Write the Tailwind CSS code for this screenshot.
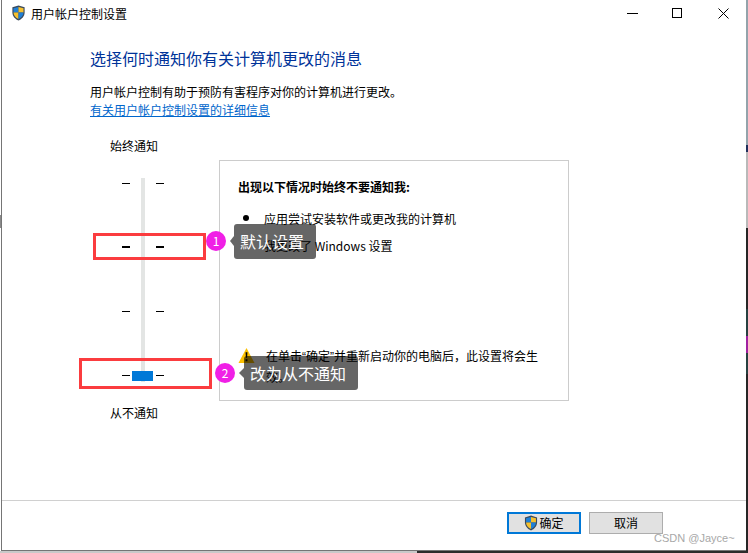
<!DOCTYPE html>
<html lang="zh">
<head>
  <meta charset="UTF-8">
  <title>用户帐户控制设置</title>
  <script src="https://cdn.jsdelivr.net/npm/@tailwindcss/browser@4"></script>
</head>
<body class="w-[748px] h-[553px] overflow-hidden bg-white font-['Noto_Sans_CJK_SC','Noto_Sans',sans-serif] text-[12px] leading-[18px] text-black">
  <div class="flex h-[551px]">
    <!-- sliver of desktop on the left -->
    <div class="w-px flex flex-col shrink-0">
      <div class="h-[215px]"></div>
      <div class="h-[13px] bg-[#8a8a8a]"></div>
    </div>

    <div class="relative w-[745px] h-[551px] bg-white border-l border-b border-[#757575] flex flex-col shrink-0">
      <!-- title bar -->
      <div class="h-[28px] flex items-center shrink-0">
        <svg class="ml-[9px] mb-[3px] w-[15px] h-[16px]" viewBox="0 0 15 17">
          <path d="M7.5 0.5 L14 2.5 V8 C14 12 11 15 7.5 16.5 C4 15 1 12 1 8 V2.5 Z" fill="#3a4a5c"/>
          <path d="M7.5 2 V8 H2.2 V3.4 Z" fill="#1f7fd6"/>
          <path d="M7.5 2 L12.8 3.4 V8 H7.5 Z" fill="#f6c02c"/>
          <path d="M2.2 8 H7.5 V15 C4.6 13.6 2.4 11.4 2.2 8 Z" fill="#f6c02c"/>
          <path d="M7.5 8 H12.8 C12.6 11.4 10.4 13.6 7.5 15 Z" fill="#1f7fd6"/>
        </svg>
        <span class="ml-[5px]">用户帐户控制设置</span>
        <div class="ml-auto flex items-center mb-[2px]">
          <svg class="w-[11px] h-[11px] mr-[34px]" viewBox="0 0 11 11"><path d="M0 5.5 H11" stroke="#000" fill="none"/></svg>
          <svg class="w-[10px] h-[10px] mr-[36px]" viewBox="0 0 10 10"><rect x="0.5" y="0.5" width="9" height="9" stroke="#000" fill="none"/></svg>
          <svg class="w-[11px] h-[11px] mr-[17px]" viewBox="0 0 11 11"><path d="M0.5 0.5 L10.5 10.5 M10.5 0.5 L0.5 10.5" stroke="#000" fill="none"/></svg>
        </div>
      </div>

      <!-- main -->
      <div class="flex-1 pl-[88px] flex flex-col">
        <h1 class="mt-[18px] text-[16px] leading-[24px] font-normal text-[#003399]">选择何时通知你有关计算机更改的消息</h1>
        <p class="mt-[13px]">用户帐户控制有助于预防有害程序对你的计算机进行更改。</p>
        <a class="underline text-[#0066cc]">有关用户帐户控制设置的详细信息</a>

        <div class="mt-[18px] flex">
          <!-- slider -->
          <div class="w-[129px] flex flex-col shrink-0">
            <span class="pl-[20px]">始终通知</span>
            <div class="relative mt-[18px] h-[209px]">
              <div class="absolute left-[51px] top-[5px] bottom-0 w-[4px] bg-[#e3e5e4]"></div>
              <div class="absolute left-[42px] top-[198px] w-[21px] h-[10px] bg-[#0078d7]"></div>
              <div class="absolute left-[32px] top-[10px] w-[8px] h-px bg-black"></div>
              <div class="absolute left-[66px] top-[10px] w-[8px] h-px bg-black"></div>
              <div class="absolute left-[32px] top-[73px] w-[8px] h-[2px] bg-black"></div>
              <div class="absolute left-[66px] top-[73px] w-[8px] h-[2px] bg-black"></div>
              <div class="absolute left-[32px] top-[138px] w-[8px] h-px bg-black"></div>
              <div class="absolute left-[66px] top-[138px] w-[8px] h-px bg-black"></div>
              <div class="absolute left-[32px] top-[202px] w-[8px] h-px bg-black"></div>
              <div class="absolute left-[66px] top-[202px] w-[8px] h-px bg-black"></div>
            </div>
            <span class="pl-[20px] mt-[22px]">从不通知</span>
          </div>
          <!-- info box -->
          <div class="mt-[23px] w-[350px] h-[241px] border border-[#cccccc] pl-[18px] pt-[17px] flex flex-col">
            <b class="font-bold">出现以下情况时始终不要通知我:</b>
            <ul class="mt-[14px]">
              <li class="flex"><span class="w-[26px] pl-[5px] pt-[5px]"><span class="block w-[6px] h-[6px] rounded-full bg-black"></span></span>应用尝试安装软件或更改我的计算机</li>
              <li class="flex mt-[9px]"><span class="w-[26px]"></span>我更改了 Windows 设置</li>
            </ul>
            <div class="mt-[91px] flex">
              <svg class="w-[17px] h-[17px] mt-[1px] shrink-0" viewBox="0 0 18 17">
                <path d="M9 0.5 L17.5 16.5 H0.5 Z" fill="#fbc000"/>
                <path d="M8 5 H10 L9.6 11 H8.4 Z M8 12.5 H10 V14.5 H8 Z" fill="#000"/>
              </svg>
              <span class="ml-[11px] leading-[19px]">在单击<span class="font-['Liberation_Sans',sans-serif]">“</span>确定<span class="font-['Liberation_Sans',sans-serif]">”</span>并重新启动你的电脑后，此设置将会生<br>效。</span>
            </div>
          </div>
        </div>
      </div>

      <!-- footer -->
      <div class="h-[50px] shrink-0 border-t border-[#d0d0d0] flex items-start pl-[505px] pt-[11px] gap-[8px]">
        <button class="w-[74px] h-[22px] border-2 border-[#0078d7] bg-[#e1e1e1] flex items-center justify-center">
          <svg class="w-[14px] h-[16px] mr-[1px]" viewBox="0 0 15 17">
            <path d="M7.5 0.5 L14 2.5 V8 C14 12 11 15 7.5 16.5 C4 15 1 12 1 8 V2.5 Z" fill="#3a4a5c"/>
            <path d="M7.5 2 V8 H2.2 V3.4 Z" fill="#1f7fd6"/>
            <path d="M7.5 2 L12.8 3.4 V8 H7.5 Z" fill="#f6c02c"/>
            <path d="M2.2 8 H7.5 V15 C4.6 13.6 2.4 11.4 2.2 8 Z" fill="#f6c02c"/>
            <path d="M7.5 8 H12.8 C12.6 11.4 10.4 13.6 7.5 15 Z" fill="#1f7fd6"/>
          </svg>
          确定
        </button>
        <button class="w-[74px] h-[22px] border border-[#adadad] bg-[#e1e1e1]">取消</button>
      </div>

      <!-- annotations over the screenshot -->
      <div class="absolute left-[91px] top-[233px] w-[113px] h-[27px] border-[3px] border-[#fb3c3f]"></div>
      <div class="absolute left-[77px] top-[358px] w-[133px] h-[31px] border-[3px] border-[#fb3c3f]"></div>

      <div class="absolute left-[204px] top-[231px] w-[20px] h-[20px] rounded-full bg-[#f01fe6] text-white text-[12px] leading-[20px] text-center">1</div>
      <div class="absolute left-[213px] top-[363px] w-[20px] h-[20px] rounded-full bg-[#f01fe6] text-white text-[12px] leading-[20px] text-center">2</div>

      <div class="absolute left-[232px] top-[224px] w-[82px] h-[35px] pl-[6px] rounded-[3px] bg-black/60 text-white text-[16px] leading-[35px]">默认设置</div>
      <div class="absolute left-[228px] top-[236px] w-0 h-0 border-y-[5px] border-y-transparent border-r-[4px] border-r-black/60"></div>
      <div class="absolute left-[242px] top-[356px] w-[114px] h-[34px] pl-[6px] rounded-[3px] bg-black/60 text-white text-[16px] leading-[34px]">改为从不通知</div>
      <div class="absolute left-[237px] top-[368px] w-0 h-0 border-y-[5px] border-y-transparent border-r-[5px] border-r-black/60"></div>

      <div class="absolute left-[652px] top-[529px] text-[11px] leading-[18px] font-['Liberation_Sans',sans-serif] text-[#a8a8a8]">CSDN @Jayce~</div>
    </div>

    <!-- desktop behind the window, right side -->
    <div class="w-[2px] flex flex-col shrink-0 bg-[#262626]">
      <div class="h-[145px] bg-[#93a3ab]"></div>
      <div class="h-[7px] bg-[#1f2f5c]"></div>
      <div class="h-[76px] bg-[#b9b9b9]"></div>
      <div class="h-[81px]"></div>
      <div class="h-[27px] bg-[#264040]"></div>
      <div class="h-[17px] bg-[#a020a0]"></div>
      <div class="h-[21px] bg-[#264040]"></div>
    </div>
  </div>
  <div class="flex h-[2px]">
    <div class="w-[417px] bg-[#c9c9c9]"></div>
    <div class="flex-1 bg-[#2b2b2b]"></div>
  </div>
</body>
</html>
